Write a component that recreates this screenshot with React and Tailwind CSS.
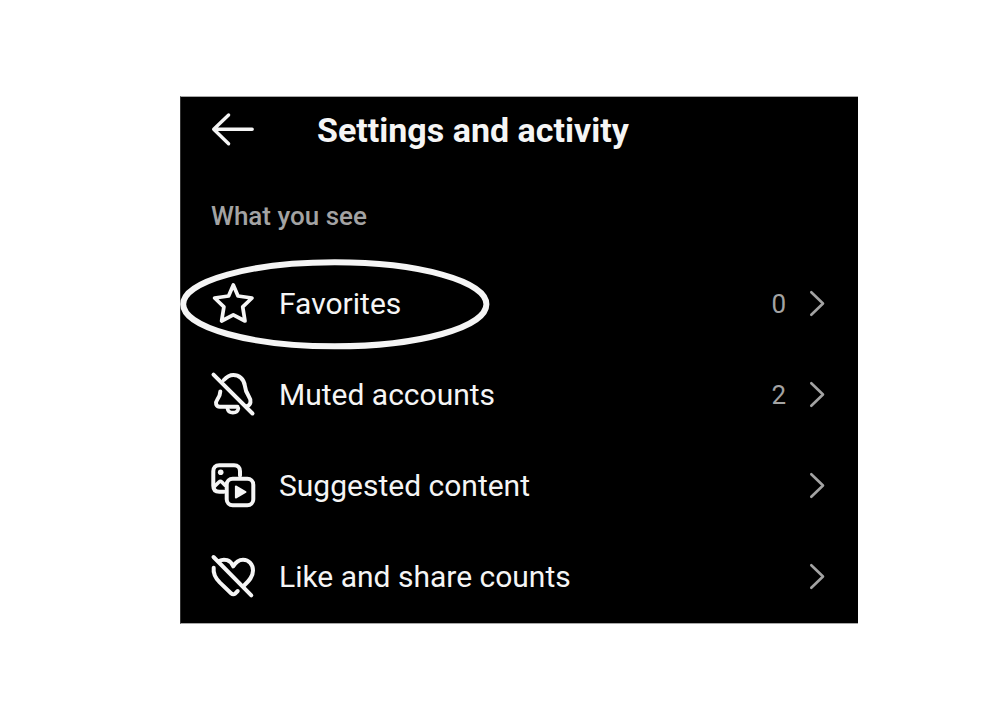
const Icon = ({ children }) => (
    <svg
        viewBox="0 0 47 47"
        className="size-[47px] shrink-0"
        fill="none"
        stroke="currentColor"
        strokeWidth="4"
        strokeLinecap="round"
        strokeLinejoin="round"
        aria-hidden="true"
    >
        {children}
    </svg>
);

const BackIcon = () => (
    <Icon>
        <path strokeWidth="3.4" d="M18.6 9 3.7 23.3 18.6 37.7M3.7 23.3H42.2" />
    </Icon>
);

const StarIcon = () => (
    <Icon>
        <path strokeWidth="3.7" d="M23.3 5 28 16 42 18 32.7 26.9 35 41 23.3 34.8 11.6 41 13.9 26.9 4.6 18 18.6 16Z" />
    </Icon>
);

const MutedIcon = () => (
    <Icon>
        <path d="M3.5 3.7 42.5 42.5" />
        <path d="M13.8 9C17 5.5 20 4 23.3 4 29 4 33.8 8 34.8 14.5 35.4 20 36.2 21.5 38.8 25.4 41.6 29.5 41 33.8 37 35.2" />
        <path d="M10.3 20.5C10.2 24.5 9.3 26 7.3 28.6 4.8 32 6 35.8 9.8 35.8H27.5" />
        <path strokeWidth="3.6" d="M17.4 37.2C17.8 40.2 20 41.6 22.9 41.6S28 40.2 28.4 37.2" />
    </Icon>
);

const ContentIcon = () => (
    <Icon>
        <path d="M30 13.5V9.3C30 5.3 28 3.3 24 3.3H9.3C5.3 3.3 3.3 5.3 3.3 9.3V23.7C3.3 27.7 5.3 29.7 9.3 29.7H14" />
        <path strokeWidth="3.6" d="M4.2 24.6 9 20C9.8 19.2 11 19.2 11.8 20L15 23.2" />
        <circle cx="10.7" cy="10.3" r="2.8" fill="currentColor" stroke="none" />
        <rect x="16.7" y="16.7" width="26.6" height="26.6" rx="6" />
        <path strokeWidth="1.8" fill="currentColor" d="M25.8 24.4V35.6L35.6 30Z" />
    </Icon>
);

const LikeIcon = () => (
    <Icon>
        <path d="M3.5 4 41.3 42.3" />
        <path d="M9 8C14.5 5 20.5 7.2 23.3 13.3 26 8.5 29.5 6.7 33 6.7 39 6.7 43 11.5 43 17.5 43 23.5 39.5 27.5 33.8 32.8" />
        <path d="M3.7 14.8C3 20.3 5.3 25 9.7 29.4L21 40.2C22.5 41.6 24 41.6 25.4 40.4L27.7 38" />
    </Icon>
);

const Chevron = () => (
    <svg viewBox="0 0 24 31" className="h-[31px] w-6 shrink-0" fill="none" stroke="currentColor" strokeWidth="2.6" strokeLinecap="round" strokeLinejoin="round" aria-hidden="true">
        <path d="M5.3 4.2 17 15.5 5.3 26.8" />
    </svg>
);

const items = [
    { label: 'Favorites', icon: StarIcon, count: 0, circled: true },
    { label: 'Muted accounts', icon: MutedIcon, count: 2 },
    { label: 'Suggested content', icon: ContentIcon },
    { label: 'Like and share counts', icon: LikeIcon },
];

const SettingsRow = ({ item }) => {
    const ItemIcon = item.icon;

    return (
        <li className="relative">
            <button className="flex h-[91px] w-full items-center pl-[29px] pr-7 text-left">
                <ItemIcon />
                <span className="ml-[22px] flex-1 text-[30px] leading-9">{item.label}</span>
                {item.count !== undefined && (
                    <span className="mr-5 text-[26px] leading-9 text-[#a3a3a3]">{item.count}</span>
                )}
                <span className="text-[#a3a3a3]">
                    <Chevron />
                </span>
            </button>
            {item.circled && (
                <svg viewBox="0 0 310 91" className="pointer-events-none absolute left-0 top-0 h-[91px] w-[310px] overflow-visible" fill="none" aria-hidden="true">
                    <ellipse cx="153.8" cy="46.3" rx="151.6" ry="42" stroke="currentColor" strokeWidth="6" />
                </svg>
            )}
        </li>
    );
};

const App = () => {
    return (
        <main className="min-h-screen bg-white pb-24 pl-[180px] pr-[142px] pt-24 font-['Roboto',sans-serif]">
            <section className="border-y border-l border-y-[#a8a8a8] border-l-[#333333] bg-black text-[#f5f5f5]">
                <header className="flex h-[65px] items-center pl-[29px]">
                    <button aria-label="Back">
                        <BackIcon />
                    </button>
                    <h1 className="ml-[60px] text-[34px] font-bold leading-[42px]">Settings and activity</h1>
                </header>
                <h2 className="pb-6 pl-[30px] pt-9 text-[26px] font-medium leading-9 text-[#a3a3a3]">What you see</h2>
                <ul className="pb-px">
                    {items.map((item) => (
                        <SettingsRow key={item.label} item={item} />
                    ))}
                </ul>
            </section>
        </main>
    );
};

export default App;
